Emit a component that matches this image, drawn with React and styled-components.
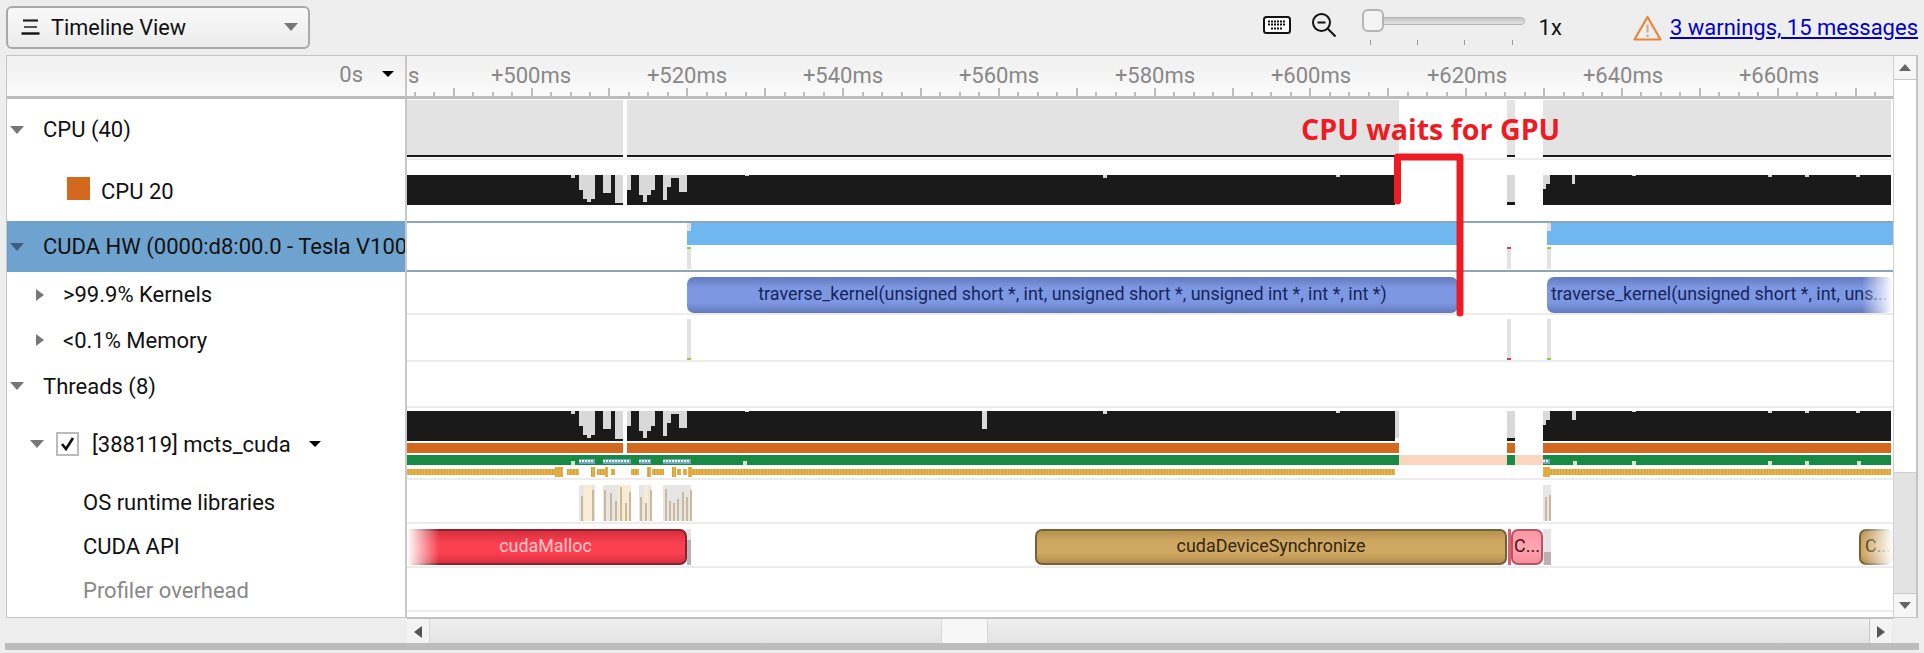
import React from "react";
import styled, { createGlobalStyle } from "styled-components";

const Global = createGlobalStyle`
  html, body { margin: 0; padding: 0; background: #eeeeee; }
  body { font-family: Roboto, "Liberation Sans", sans-serif; color: #111; overflow: hidden; }
  * { box-sizing: border-box; }
`;

const X0 = 407;
const TRACK_W = 1486;

const Page = styled.div`
  width: 1924px;
  height: 653px;
  display: flex;
  flex-direction: column;
  position: relative;
`;
const Toolbar = styled.div`
  height: 55px;
  display: flex;
  align-items: center;
  padding: 0 6px;
`;
const SelectButton = styled.div`
  width: 304px;
  height: 43px;
  margin-top: -1px;
  border: 2px solid #a9a9a9;
  border-radius: 6px;
  background: linear-gradient(#f9f9f9, #ececec);
  display: flex;
  align-items: center;
  padding: 0 10px 0 13px;
  gap: 11px;
  font-size: 21.7px;
`;
const Grow = styled.span`
  flex: 1;
`;
const Caret = styled.span`
  display: inline-block;
  flex: none;
  width: 0;
  height: 0;
  ${(p) =>
    p.$right
      ? `border-top: 6px solid transparent; border-bottom: 6px solid transparent; border-left: 8px solid ${p.$c || "#777"};`
      : `border-left: ${p.$s || 7}px solid transparent; border-right: ${p.$s || 7}px solid transparent; border-top: ${p.$h || 8}px solid ${p.$c || "#777"};`}
`;
const ToolIcon = styled.svg`
  flex: none;
  margin-left: ${(p) => p.$ml || 0}px;
  margin-top: ${(p) => p.$mt || 0}px;
`;
const Slider = styled.div`
  position: relative;
  width: 163px;
  height: 55px;
  margin-left: 25px;
`;
const SliderTrack = styled.div`
  position: absolute;
  left: 10px;
  right: 0;
  top: 17px;
  height: 8px;
  border-radius: 4px;
  border: 1px solid #b5b5b5;
  background: linear-gradient(#c4c4c4, #e4e4e4);
`;
const SliderThumb = styled.div`
  position: absolute;
  left: 0;
  top: 9px;
  width: 22px;
  height: 23px;
  border-radius: 6px;
  border: 2px solid #b4b4b4;
  background: #f4f4f4;
`;
const SliderTicks = styled.div`
  position: absolute;
  left: 8px;
  right: 12px;
  top: 40px;
  display: flex;
  justify-content: space-between;
`;
const SliderTick = styled.i`
  width: 1px;
  height: 5px;
  background: #999;
`;
const Speed = styled.span`
  margin-left: 14px;
  font-size: 22px;
`;
const WarnLink = styled.a`
  margin-left: 8px;
  font-size: 22px;
  color: #0000c8;
  text-decoration: underline;
  white-space: nowrap;
`;

const Panel = styled.div`
  margin-left: 6px;
  width: 1912px;
  height: 563px;
  display: flex;
  border: 1px solid #c4c4c4;
  border-right-width: 2px;
  background: #fff;
`;
const Main = styled.div`
  width: 1886px;
  display: flex;
  flex-direction: column;
`;
const HeaderRow = styled.div`
  height: 43px;
  display: flex;
  border-bottom: 3px solid #bcbcbc;
  background: linear-gradient(#f0f0f0, #fbfbfb);
`;
const LeftCell = styled.div`
  width: 400px;
  flex: none;
  border-right: 2px solid #c8c8c8;
  display: flex;
  align-items: center;
  overflow: hidden;
`;
const HeaderLeft = styled(LeftCell)`
  justify-content: flex-end;
  gap: 19px;
  padding: 0 11px 4px 0;
  color: #888;
  font-size: 22px;
`;
const Axis = styled.div`
  flex: 1;
  position: relative;
  overflow: hidden;
`;
const AxisLabel = styled.span`
  position: absolute;
  top: 7px;
  left: ${(p) => p.$x - X0}px;
  transform: translateX(${(p) => (p.$edge ? "0" : "-50%")});
  color: #888;
  font-size: 22px;
  white-space: nowrap;
`;
const Ticks = styled.svg`
  position: absolute;
  left: 0;
  bottom: 0;
`;
const Row = styled.div`
  height: ${(p) => p.$h}px;
  display: flex;
  flex: none;
`;
const Label = styled(LeftCell)`
  padding-left: ${(p) => p.$pl}px;
  padding-top: ${(p) => p.$pt || 0}px;
  font-size: 22px;
  white-space: nowrap;
  color: ${(p) => (p.$muted ? "#888" : "#111")};
  background: ${(p) => (p.$selected ? "#6fa3cf" : "#fff")};
`;
const CaretSlot = styled.span`
  flex: none;
  width: ${(p) => p.$w}px;
  display: flex;
  align-items: center;
`;
const Swatch = styled.span`
  flex: none;
  width: 23px;
  height: 23px;
  margin-right: 11px;
  margin-top: -7px;
  background: #d2691e;
`;
const Checkbox = styled.span`
  flex: none;
  width: 23px;
  height: 24px;
  margin-right: 13px;
  border: 2px solid #bbb;
  background: #fff;
  display: flex;
  align-items: center;
  justify-content: center;
`;
const ThreadName = styled.span`
  margin-right: 18px;
`;
const Track = styled.div`
  flex: 1;
  position: relative;
  overflow: hidden;
  background: #fff;
  box-shadow: ${(p) => (p.$sel ? "inset 0 2px 0 #8aa6b8, inset 0 -2px 0 #8aa6b8" : p.$line ? "inset 0 -2px 0 #ececec" : "none")};
`;
const Drawing = styled.svg`
  position: absolute;
  left: 0;
  top: 0;
`;
const Span = styled.div`
  position: absolute;
  top: 5px;
  height: 36px;
  left: ${(p) => p.$x - X0}px;
  width: ${(p) => p.$w}px;
  border-radius: 7px;
  display: flex;
  align-items: center;
  justify-content: ${(p) => (p.$start ? "flex-start" : "center")};
  padding: 0 ${(p) => (p.$start ? 4 : 2)}px 4px;
  font-size: 17.9px;
  white-space: nowrap;
  overflow: hidden;
`;
const KernelSpan = styled(Span)`
  background: linear-gradient(#6479bb, #7d98e2 30%, #7d98e2 70%, #6479bb);
  color: #16255c;
`;
const MallocSpan = styled(Span)`
  border: 2px solid #8c2230;
  background: linear-gradient(#d8303e, #fb4050 40%, #fb4050 70%, #d8303e);
  color: #ffc4ca;
`;
const SyncSpan = styled(Span)`
  border: 2px solid #75603a;
  background: linear-gradient(#b8924f, #cfa862 35%, #cfa862 70%, #b18c4c);
  color: #33240c;
`;
const CallSpan = styled(Span)`
  border: 2px solid #b55565;
  background: linear-gradient(#fb96a2, #ffa6b0 50%, #f98e9c);
  color: #3f1218;
`;
const FadeRight = styled.div`
  position: absolute;
  top: 0;
  bottom: 2px;
  right: 0;
  width: 31px;
  background: linear-gradient(to right, rgba(255, 255, 255, 0), #fff);
`;
const FadeLeft = styled.div`
  position: absolute;
  top: 0;
  bottom: 2px;
  left: 0;
  width: 32px;
  background: linear-gradient(to left, rgba(255, 255, 255, 0), #fff);
`;
const Filler = styled.div`
  flex: 1;
  display: flex;
`;
const VScroll = styled.div`
  flex: 1;
  display: flex;
  flex-direction: column;
  border-left: 1px solid #d0d0d0;
`;
const ScrollBtn = styled.div`
  flex: none;
  height: ${(p) => p.$h}px;
  display: flex;
  align-items: center;
  justify-content: center;
  background: #f6f6f6;
  border-${(p) => (p.$top ? "bottom" : "top")}: 1px solid #c8c8c8;
`;
const VThumb = styled.div`
  flex: none;
  height: 393px;
  background: #fff;
  border-bottom: 1px solid #cfcfcf;
`;
const VTrack = styled.div`
  flex: 1;
  background: #e3e3e3;
`;
const HScrollRow = styled.div`
  height: 26px;
  margin-left: 401px;
  width: 1486px;
  display: flex;
  background: linear-gradient(#f0f0f0, #e2e2e2);
  border-top: 1px solid #c0c0c0;
`;
const HBtn = styled.div`
  flex: none;
  width: 23px;
  display: flex;
  align-items: center;
  justify-content: center;
  background: #f3f3f3;
  ${(p) => (p.$left ? "border-right: 1px solid #d8d8d8;" : "border-left: 1px solid #c8c8c8;")}
`;
const HSpace = styled.div`
  flex: none;
  width: ${(p) => p.$w}px;
`;
const HThumb = styled.div`
  flex: none;
  width: 47px;
  background: #f7f7f7;
  border-left: 1px solid #d8d8d8;
  border-right: 1px solid #d8d8d8;
`;
const BottomBar = styled.div`
  height: 7px;
  margin: 0 5px 0 5px;
  background: #bcbcbc;
`;
const HScrollWrap = styled.div`
  margin-left: 6px;
  height: 25px;
`;
const Annotation = styled.div`
  position: absolute;
  left: 1301px;
  top: 110px;
  font-family: "Open Sans", sans-serif;
  font-weight: 700;
  font-size: 28.6px;
  line-height: 38px;
  color: #ed1c24;
  white-space: nowrap;
`;
const Bracket = styled.svg`
  position: absolute;
  left: 0;
  top: 0;
  pointer-events: none;
`;

const notchesA = [
  [571, 4, 3], [579, 4, 15], [583, 8, 24], [587, 4, 27], [591, 4, 24], [603, 8, 18],
  [615, 8, 28], [627, 4, 15], [639, 4, 20], [643, 4, 27], [647, 4, 20], [651, 4, 15],
  [663, 4, 25], [667, 4, 12], [679, 8, 17], [671, 8, 3], [745, 4, 1], [1103, 4, 3],
  [1336, 4, 2], [1543, 3, 14], [1546, 4, 9], [1572, 3, 9], [1632, 4, 1], [1768, 4, 2],
  [1805, 4, 2], [1856, 4, 2],
];
const notchesB = [...notchesA, [982, 5, 18], [1395, 4, 27], [1573, 3, 9]];

const Cpu = ({ y, notches, endGray }) => (
  <g>
    {[[407, 216], [627, endGray - 627], [1507, 8], [1543, 348]].map(([x, w]) => (
      <rect key={x} x={x} y={y} width={w} height={30} fill={x === 1507 ? "#d8d8d8" : "#1a1a1a"} />
    ))}
    <rect x={1507} y={y + 27} width={8} height={3} fill="#1a1a1a" />
    {notches.map(([x, w, nh], i) => (
      <rect key={i} x={x} y={y} width={w} height={nh} fill="#d9d9d9" />
    ))}
  </g>
);

const View = ({ h, children }) => (
  <Drawing width={TRACK_W} height={h} viewBox={`${X0} 0 ${TRACK_W} ${h}`} shapeRendering="crispEdges">
    {children}
  </Drawing>
);

const Kticks = ({ h }) => (
  <>
    <rect x={687} y={h[0]} width={4} height={h[1]} fill="#e2e2e2" />
    <rect x={1507} y={h[0]} width={4} height={h[1]} fill="#e2e2e2" />
    <rect x={1547} y={h[0]} width={4} height={h[1]} fill="#e2e2e2" />
  </>
);

const osBlocks = [[579, 16], [603, 28], [639, 12], [663, 28], [1543, 8]];
const osCream = [[584, 8], [618, 12], [644, 4]];
const osLines = [
  [581, 18], [592, 8], [604, 8], [610, 14], [615, 26], [620, 4], [625, 30], [629, 12],
  [640, 20], [645, 30], [650, 8], [665, 6], [669, 26], [673, 30], [677, 24], [682, 12],
  [686, 20], [690, 8], [1545, 20], [1549, 16],
];
const goldRuns = [
  [407, 148], [555, 8, true], [567, 12], [591, 4, true], [597, 8], [605, 3, true], [611, 4],
  [631, 8], [647, 4, true], [652, 12], [672, 4, true], [677, 4], [683, 4], [688, 4, true], [692, 703],
  [1543, 7, true], [1550, 341],
];
const dotRuns = [[579, 16], [603, 28], [639, 12], [663, 28], [1543, 7]];
const greenNotches = [571, 743, 1573, 1632, 1768, 1805, 1857];
const labels = [500, 520, 540, 560, 580, 600, 620, 640, 660];

export default function App() {
  const ticks = [];
  for (let k = -6; k < 70; k++) ticks.push({ x: 530.6 + k * 19.47, tall: ((k % 4) + 4) % 4 === 0 });
  return (
    <Page>
      <Global />
      <Toolbar>
        <SelectButton>
          <svg width="19" height="16" viewBox="0 0 19 16">
            <path d="M2 1.5h15" stroke="#222" strokeWidth="2.2" fill="none" />
            <path d="M3 8h13" stroke="#555" strokeWidth="2" fill="none" />
            <path d="M0.5 14.5h18" stroke="#111" strokeWidth="2.4" fill="none" />
          </svg>
          Timeline View
          <Grow />
          <Caret $s={7} $h={8} />
        </SelectButton>
        <Grow />
        <ToolIcon width="28" height="18" viewBox="0 0 28 18" $mt={-5}>
          <rect x="1" y="1" width="26" height="16" rx="2.5" fill="#fff" stroke="#111" strokeWidth="2" />
          <path d="M5 5.5h18M5 8.5h18M8 12.5h12" stroke="#111" strokeWidth="2" strokeDasharray="2 1" fill="none" />
        </ToolIcon>
        <ToolIcon width="26" height="26" viewBox="0 0 26 26" $ml={20} $mt={-5}>
          <circle cx="10.5" cy="10.5" r="8.5" fill="none" stroke="#111" strokeWidth="2" />
          <path d="M6.5 10.5h8M16.8 16.8L24.5 24.5" stroke="#111" strokeWidth="2" fill="none" />
        </ToolIcon>
        <Slider>
          <SliderTrack />
          <SliderThumb />
          <SliderTicks>
            <SliderTick />
            <SliderTick />
            <SliderTick />
            <SliderTick />
          </SliderTicks>
        </Slider>
        <Speed>1x</Speed>
        <ToolIcon width="29" height="26" viewBox="0 0 29 26" $ml={71}>
          <path d="M14.5 2L27.5 24.5H1.5Z" fill="none" stroke="#e8853a" strokeWidth="2.2" strokeLinejoin="round" />
          <path d="M14.5 9.5v8M14.5 19.5v2.5" stroke="#d9a887" strokeWidth="2.2" fill="none" />
        </ToolIcon>
        <WarnLink href="#">3 warnings, 15 messages</WarnLink>
      </Toolbar>

      <Panel>
        <Main>
          <HeaderRow>
            <HeaderLeft>
              <span>0s</span>
              <Caret $s={6} $h={6} $c="#000" />
            </HeaderLeft>
            <Axis>
              <AxisLabel $x={408} $edge>
                s
              </AxisLabel>
              {labels.map((l, i) => (
                <AxisLabel key={l} $x={531 + i * 156}>
                  +{l}ms
                </AxisLabel>
              ))}
              <Ticks width={TRACK_W} height={8} viewBox={`${X0} 0 ${TRACK_W} 8`} shapeRendering="crispEdges">
                {ticks.map((t) => (
                  <rect key={t.x} x={t.x} y={t.tall ? 0 : 4} width={2} height={t.tall ? 8 : 4} fill="#bdbdbd" />
                ))}
              </Ticks>
            </Axis>
          </HeaderRow>

          <Row $h={61}>
            <Label $pl={3}>
              <CaretSlot $w={33}>
                <Caret />
              </CaretSlot>
              CPU (40)
            </Label>
            <Track $line>
              <View h={61}>
                {[[407, 216], [627, 772], [1507, 8], [1543, 348]].map(([x, w]) => (
                  <g key={x}>
                    <rect x={x} y={1} width={w} height={55} fill="#e3e3e3" />
                    <rect x={x} y={56} width={w} height={2} fill="#1a1a1a" />
                  </g>
                ))}
              </View>
            </Track>
          </Row>
          <Row $h={61}>
            <Label $pl={60} $pt={2}>
              <Swatch />
              CPU 20
            </Label>
            <Track>
              <View h={61}>
                <Cpu y={15} notches={notchesA} endGray={1395} />
              </View>
            </Track>
          </Row>
          <Row $h={51}>
            <Label $pl={3} $selected>
              <CaretSlot $w={33}>
                <Caret $c="#3f5f7c" />
              </CaretSlot>
              CUDA HW (0000:d8:00.0 - Tesla V100
            </Label>
            <Track $sel>
              <View h={51}>
                <rect x={691} y={2} width={767} height={22} fill="#6fb7f1" />
                <rect x={687} y={10} width={4} height={14} fill="#6fb7f1" />
                <rect x={1551} y={2} width={342} height={22} fill="#6fb7f1" />
                <rect x={1547} y={10} width={4} height={14} fill="#6fb7f1" />
                <rect x={687} y={2} width={4} height={8} fill="#e2e2e2" />
                <rect x={1547} y={2} width={4} height={8} fill="#e2e2e2" />
                <Kticks h={[28, 20]} />
                <rect x={687} y={26} width={4} height={2} fill="#8ad040" />
                <rect x={1507} y={26} width={4} height={2} fill="#c44" />
                <rect x={1547} y={26} width={4} height={2} fill="#8ad040" />
              </View>
            </Track>
          </Row>
          <Row $h={43}>
            <Label $pl={29} $pt={2}>
              <CaretSlot $w={27}>
                <Caret $right />
              </CaretSlot>
              &gt;99.9% Kernels
            </Label>
            <Track $line>
              <KernelSpan $x={687} $w={771}>
                traverse_kernel(unsigned short *, int, unsigned short *, unsigned int *, int *, int *)
              </KernelSpan>
              <KernelSpan $x={1547} $w={346} $start>
                traverse_kernel(unsigned short *, int, uns...
              </KernelSpan>
              <FadeRight />
            </Track>
          </Row>
          <Row $h={47}>
            <Label $pl={29} $pt={3}>
              <CaretSlot $w={27}>
                <Caret $right />
              </CaretSlot>
              &lt;0.1% Memory
            </Label>
            <Track $line>
              <View h={47}>
                <Kticks h={[4, 40]} />
                <rect x={687} y={43} width={4} height={2} fill="#8ad040" />
                <rect x={1507} y={43} width={4} height={2} fill="#c44" />
                <rect x={1547} y={43} width={4} height={2} fill="#8ad040" />
              </View>
            </Track>
          </Row>
          <Row $h={46}>
            <Label $pl={3} $pt={2}>
              <CaretSlot $w={33}>
                <Caret />
              </CaretSlot>
              Threads (8)
            </Label>
            <Track $line />
          </Row>
          <Row $h={72}>
            <Label $pl={23}>
              <CaretSlot $w={26}>
                <Caret />
              </CaretSlot>
              <Checkbox>
                <svg width="15" height="14" viewBox="0 0 15 14">
                  <path d="M2 7l4 5 7-11" fill="none" stroke="#111" strokeWidth="2.6" />
                </svg>
              </Checkbox>
              <ThreadName>[388119] mcts_cuda</ThreadName>
              <Caret $s={6} $h={6} $c="#000" />
            </Label>
            <Track $line>
              <View h={72}>
                <defs>
                  <pattern id="goldStripe" x="0" y="0" width="3" height="10" patternUnits="userSpaceOnUse">
                    <rect width="3" height="10" fill="#e6b148" />
                    <rect width="1" height="10" fill="#d6a038" />
                  </pattern>
                </defs>
                <Cpu y={3} notches={notchesB} endGray={1395} />
                {[[407, 216], [627, 772], [1507, 8], [1543, 348]].map(([x, w]) => (
                  <rect key={x} x={x} y={35} width={w} height={10} fill="#d2691e" />
                ))}
                <rect x={407} y={47} width={992} height={10} fill="#178a45" />
                <rect x={1399} y={47} width={108} height={10} fill="#fbd5bd" />
                <rect x={1507} y={47} width={8} height={10} fill="#178a45" />
                <rect x={1515} y={47} width={28} height={10} fill="#fbd5bd" />
                <rect x={1543} y={47} width={348} height={10} fill="#178a45" />
                {dotRuns.map(([x, w]) => (
                  <g key={x}>
                    <rect x={x} y={51} width={w} height={5} fill="#6fa8b8" />
                    {Array.from({ length: Math.floor(w / 3) }).map((_, i) => (
                      <rect key={i} x={x + i * 3} y={52} width={2} height={2} fill="#f3f3f3" />
                    ))}
                  </g>
                ))}
                {greenNotches.map((x) => (
                  <rect key={x} x={x} y={53} width={4} height={4} fill="#cfe9cf" />
                ))}
                {goldRuns.map(([x, w, tall]) => (
                  <rect key={x} x={x} y={tall ? 59 : 61} width={w} height={tall ? 10 : 6} fill="url(#goldStripe)" />
                ))}
              </View>
            </Track>
          </Row>
          <Row $h={44}>
            <Label $pl={76}>OS runtime libraries</Label>
            <Track $line>
              <View h={44}>
                {osBlocks.map(([x, w]) => (
                  <rect key={x} x={x} y={5} width={w} height={36} fill="#e6e6e6" />
                ))}
                {osCream.map(([x, w]) => (
                  <rect key={x} x={x} y={5} width={w} height={36} fill="#f9ecd5" />
                ))}
                {osLines.map(([x, t]) => (
                  <rect key={x} x={x} y={5 + t * 0.6} width={2} height={36 - t * 0.6} fill="#cbb99a" />
                ))}
              </View>
            </Track>
          </Row>
          <Row $h={44}>
            <Label $pl={76}>CUDA API</Label>
            <Track $line>
              <View h={44}>
                <rect x={687} y={5} width={4} height={36} fill="#e2e2e2" />
                <rect x={687} y={16} width={4} height={25} fill="#b4b4b4" />
                <rect x={1543} y={5} width={8} height={36} fill="#e4e4e4" />
                <rect x={1544} y={28} width={7} height={13} fill="#bdb0b0" />
                <rect x={1508} y={5} width={3} height={36} fill="#d9606e" />
              </View>
              <MallocSpan $x={404} $w={283}>
                cudaMalloc
              </MallocSpan>
              <SyncSpan $x={1035} $w={472}>
                cudaDeviceSynchronize
              </SyncSpan>
              <CallSpan $x={1511} $w={32}>
                C...
              </CallSpan>
              <SyncSpan $x={1859} $w={34} $start>
                C...
              </SyncSpan>
              <FadeLeft />
              <FadeRight />
            </Track>
          </Row>
          <Row $h={44}>
            <Label $pl={76} $muted>
              Profiler overhead
            </Label>
            <Track $line />
          </Row>
          <Filler>
            <LeftCell />
          </Filler>
        </Main>
        <VScroll>
          <ScrollBtn $h={24} $top>
            <Caret style={{ transform: "rotate(180deg)" }} $c="#666" $s={6} $h={7} />
          </ScrollBtn>
          <VThumb />
          <VTrack />
          <ScrollBtn $h={24}>
            <Caret $c="#666" $s={6} $h={7} />
          </ScrollBtn>
        </VScroll>
      </Panel>
      <HScrollWrap>
        <HScrollRow>
          <HBtn $left>
            <Caret $right style={{ transform: "rotate(180deg)" }} $c="#555" />
          </HBtn>
          <HSpace $w={511} />
          <HThumb />
          <HSpace $w={881} />
          <HBtn>
            <Caret $right $c="#555" />
          </HBtn>
        </HScrollRow>
      </HScrollWrap>
      <BottomBar />
      <Annotation>CPU waits for GPU</Annotation>
      <Bracket width="1924" height="653">
        <path d="M1397.5 201V157H1460V313" fill="none" stroke="#ed1c24" strokeWidth="7" strokeLinecap="round" strokeLinejoin="round" />
      </Bracket>
    </Page>
  );
}
